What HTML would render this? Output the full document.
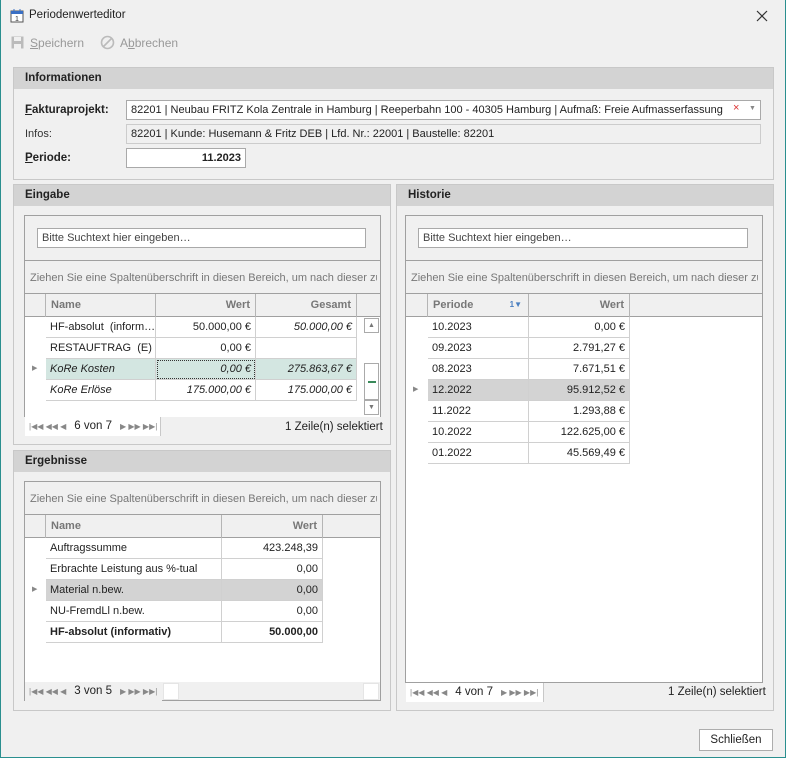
<!DOCTYPE html>
<html><head><meta charset="utf-8"><style>
*{box-sizing:border-box;margin:0;padding:0}
body{width:786px;height:758px;background:#f0f0f0;font-family:"Liberation Sans",sans-serif;font-size:11px;color:#222;position:relative;overflow:hidden}
.a{position:absolute;white-space:nowrap}
.frame{left:0;top:0;width:786px;height:758px;border:1px solid #2a8f8f;border-top:none}
.pan{border:1px solid #c8c8c8;background:#f0f0f0}
.ph{background:#d3d3d3;height:21px;font-weight:bold;padding:4px 0 0 11px;font-size:11.5px;color:#222}
.box{background:#fff;border:1px solid #a9a9a9;overflow:hidden}
.gb{border:1px solid #a0a0a0;background:#f0f0f0}
.grp{color:#777;font-size:11px;white-space:nowrap;overflow:hidden}
.hd{color:#777;font-weight:bold;height:23px;line-height:22px;border-right:1px solid #b5b5b5;padding:0 5px}
.c{height:21px;line-height:20px;border-right:1px solid #d0d0d0;border-bottom:1px solid #d0d0d0;padding:0 4px;white-space:nowrap;overflow:hidden;background:#fff}
.r{text-align:right}
.nav{color:#888;font-size:8px;background:#fff;height:19px;line-height:19px;padding-left:4px;border-right:1px solid #c8c8c8;overflow:hidden;white-space:nowrap}
.nav b{font-weight:normal;color:#222;font-size:11.5px;margin:0 8px}
</style></head><body>
<div class="a frame"></div>
<svg class="a" style="left:10px;top:8px" width="14" height="15" viewBox="0 0 14 15"><rect x="1" y="3" width="12" height="11" fill="#fff" stroke="#555"/><rect x="1" y="3" width="12" height="3" fill="#3a6fc4"/><line x1="4" y1="1" x2="4" y2="4" stroke="#3a6fc4"/><line x1="10" y1="1" x2="10" y2="4" stroke="#3a6fc4"/><text x="5" y="13" font-size="7" fill="#333" font-family="Liberation Sans">1</text></svg>
<div class="a" style="left:29px;top:9px;font-size:11.5px">Periodenwerteditor</div>
<svg class="a" style="left:756px;top:10px" width="12" height="12"><path d="M1 1L11 11M11 1L1 11" stroke="#333" stroke-width="1.2"/></svg>
<svg class="a" style="left:11px;top:36px" width="13" height="13"><rect x="0.5" y="0.5" width="12" height="12" fill="#bbb"/><rect x="3" y="1" width="7" height="4" fill="#f0f0f0"/><rect x="3" y="8" width="7" height="5" fill="#f0f0f0"/></svg>
<div class="a" style="left:30px;top:36px;color:#999;font-size:12px"><u>S</u>peichern</div>
<svg class="a" style="left:100px;top:35px" width="15" height="15"><circle cx="7.5" cy="7.5" r="6" fill="none" stroke="#bbb" stroke-width="1.6"/><path d="M3.5 11.5L11.5 3.5" stroke="#bbb" stroke-width="1.6"/></svg>
<div class="a" style="left:120px;top:36px;color:#999;font-size:12px">A<u>b</u>brechen</div>

<div class="a pan" style="left:13px;top:67px;width:761px;height:113px"><div class="ph">Informationen</div></div>
<div class="a" style="left:25px;top:104px;font-weight:bold;font-size:11.5px"><u>F</u>akturaprojekt:</div>
<div class="a box" style="left:126px;top:100px;width:635px;height:20px;padding:3px 4px">82201 | Neubau FRITZ Kola Zentrale in Hamburg | Reeperbahn 100 - 40305 Hamburg | Aufmaß: Freie Aufmasserfassung</div>
<div class="a" style="left:733px;top:102px;color:#d33;font-size:11px;background:#fff">×</div>
<div class="a" style="left:749px;top:105px;color:#888;font-size:7px">▼</div>
<div class="a" style="left:25px;top:128px;color:#333">Infos:</div>
<div class="a" style="left:126px;top:124px;width:635px;height:20px;border:1px solid #ccc;background:#f0f0f0;padding:3px 4px">82201 | Kunde: Husemann &amp; Fritz DEB | Lfd. Nr.: 22001 | Baustelle: 82201</div>
<div class="a" style="left:25px;top:152px;font-weight:bold;font-size:11.5px"><u>P</u>eriode:</div>
<div class="a box" style="left:126px;top:148px;width:120px;height:20px;padding:3px 4px;text-align:right;font-weight:bold">11.2023</div>

<div class="a pan" style="left:13px;top:184px;width:378px;height:261px"><div class="ph">Eingabe</div></div>
<div class="a gb" style="left:24px;top:215px;width:357px;height:202px"></div>
<div class="a box" style="left:37px;top:228px;width:329px;height:20px;padding:3px 4px;color:#444">Bitte Suchtext hier eingeben…</div>
<div class="a" style="left:24px;top:260px;width:357px;border-top:1px solid #a0a0a0"></div>
<div class="a grp" style="left:30px;top:272px;width:347px">Ziehen Sie eine Spaltenüberschrift in diesen Bereich, um nach dieser zu gruppieren</div>
<div class="a" style="left:25px;top:293px;width:355px;height:124px;background:#fff;border-top:1px solid #a0a0a0"></div>
<div class="a" style="left:25px;top:294px;width:355px;height:23px;background:#f0f0f0;border-bottom:1px solid #a0a0a0"></div>
<div class="a hd" style="left:25px;top:294px;width:21px"></div>
<div class="a hd" style="left:46px;top:294px;width:110px">Name</div>
<div class="a hd r" style="left:156px;top:294px;width:100px">Wert</div>
<div class="a hd r" style="left:256px;top:294px;width:101px">Gesamt</div>
<div class="a" style="left:46px;top:317px">
<div style="display:flex"><div class="c" style="width:110px">HF-absolut&nbsp; (inform…</div><div class="c r" style="width:100px">50.000,00 €</div><div class="c r" style="width:101px;font-style:italic">50.000,00 €</div></div>
<div style="display:flex"><div class="c" style="width:110px">RESTAUFTRAG&nbsp; (E)</div><div class="c r" style="width:100px">0,00 €</div><div class="c r" style="width:101px"></div></div>
<div style="display:flex;font-style:italic"><div class="c" style="width:110px;background:#d3e6e1">KoRe Kosten</div><div class="c r" style="width:100px;background:#d3e6e1;outline:1px dotted #333;outline-offset:-2px">0,00 €</div><div class="c r" style="width:101px;background:#d3e6e1">275.863,67 €</div></div>
<div style="display:flex;font-style:italic"><div class="c" style="width:110px">KoRe Erlöse</div><div class="c r" style="width:100px">175.000,00 €</div><div class="c r" style="width:101px">175.000,00 €</div></div>
</div>
<div class="a" style="left:32px;top:364px;color:#888;font-size:7px">▶</div>
<div class="a" style="left:364px;top:318px;width:15px;height:15px;border:1px solid #aaa;background:#fff;color:#777;font-size:7px;text-align:center;line-height:13px">▲</div>
<div class="a" style="left:364px;top:363px;width:15px;height:37px;border:1px solid #aaa;background:#fff"><div style="position:absolute;left:3px;top:17px;width:8px;height:2px;background:#3a8a5a"></div></div>
<div class="a" style="left:364px;top:400px;width:15px;height:15px;border:1px solid #aaa;background:#fff;color:#777;font-size:7px;text-align:center;line-height:13px">▼</div>
<div class="a nav" style="left:25px;top:417px;width:136px">|◀◀ ◀◀ ◀<b>6 von 7</b>▶ ▶▶ ▶▶|</div>
<div class="a" style="left:285px;top:421px;font-size:11.5px">1 Zeile(n) selektiert</div>

<div class="a pan" style="left:13px;top:450px;width:378px;height:261px"><div class="ph">Ergebnisse</div></div>
<div class="a gb" style="left:24px;top:481px;width:357px;height:220px"></div>
<div class="a grp" style="left:30px;top:493px;width:347px">Ziehen Sie eine Spaltenüberschrift in diesen Bereich, um nach dieser zu gruppieren</div>
<div class="a" style="left:25px;top:514px;width:355px;height:168px;background:#fff;border-top:1px solid #a0a0a0"></div>
<div class="a" style="left:25px;top:515px;width:355px;height:23px;background:#f0f0f0;border-bottom:1px solid #a0a0a0"></div>
<div class="a hd" style="left:25px;top:515px;width:21px"></div>
<div class="a hd" style="left:46px;top:515px;width:176px">Name</div>
<div class="a hd r" style="left:222px;top:515px;width:101px">Wert</div>
<div class="a" style="left:46px;top:538px">
<div style="display:flex"><div class="c" style="width:176px">Auftragssumme</div><div class="c r" style="width:101px">423.248,39</div></div>
<div style="display:flex"><div class="c" style="width:176px">Erbrachte Leistung aus %-tual</div><div class="c r" style="width:101px">0,00</div></div>
<div style="display:flex"><div class="c" style="width:176px;background:#d3d3d3">Material n.bew.</div><div class="c r" style="width:101px;background:#d3d3d3">0,00</div></div>
<div style="display:flex"><div class="c" style="width:176px">NU-FremdLl n.bew.</div><div class="c r" style="width:101px">0,00</div></div>
<div style="display:flex;font-weight:bold"><div class="c" style="width:176px">HF-absolut (informativ)</div><div class="c r" style="width:101px">50.000,00</div></div>
</div>
<div class="a" style="left:32px;top:585px;color:#888;font-size:7px">▶</div>
<div class="a nav" style="left:25px;top:682px;width:137px;background:#f0f0f0;border:none">|◀◀ ◀◀ ◀<b>3 von 5</b>▶ ▶▶ ▶▶|</div>
<div class="a" style="left:162px;top:682px;width:218px;height:18px;background:#f0f0f0"></div>
<div class="a" style="left:163px;top:683px;width:16px;height:17px;background:#fff;border:1px solid #e5e5e5"></div>
<div class="a" style="left:363px;top:683px;width:16px;height:17px;background:#fff;border:1px solid #e5e5e5"></div>

<div class="a pan" style="left:396px;top:184px;width:378px;height:527px"><div class="ph">Historie</div></div>
<div class="a gb" style="left:405px;top:215px;width:358px;height:468px"></div>
<div class="a box" style="left:418px;top:228px;width:330px;height:20px;padding:3px 4px;color:#444">Bitte Suchtext hier eingeben…</div>
<div class="a" style="left:405px;top:260px;width:358px;border-top:1px solid #a0a0a0"></div>
<div class="a grp" style="left:411px;top:272px;width:347px">Ziehen Sie eine Spaltenüberschrift in diesen Bereich, um nach dieser zu gruppieren</div>
<div class="a" style="left:406px;top:293px;width:356px;height:389px;background:#fff;border-top:1px solid #a0a0a0"></div>
<div class="a" style="left:406px;top:294px;width:356px;height:23px;background:#f0f0f0;border-bottom:1px solid #a0a0a0"></div>
<div class="a hd" style="left:406px;top:294px;width:22px"></div>
<div class="a hd" style="left:428px;top:294px;width:101px">Periode<span style="position:absolute;right:6px;font-size:8px;color:#4a7fc0">1▼</span></div>
<div class="a hd r" style="left:529px;top:294px;width:101px">Wert</div>
<div class="a" style="left:428px;top:317px">
<div style="display:flex"><div class="c" style="width:101px">10.2023</div><div class="c r" style="width:101px">0,00 €</div></div>
<div style="display:flex"><div class="c" style="width:101px">09.2023</div><div class="c r" style="width:101px">2.791,27 €</div></div>
<div style="display:flex"><div class="c" style="width:101px">08.2023</div><div class="c r" style="width:101px">7.671,51 €</div></div>
<div style="display:flex"><div class="c" style="width:101px;background:#d3d3d3">12.2022</div><div class="c r" style="width:101px;background:#d3d3d3">95.912,52 €</div></div>
<div style="display:flex"><div class="c" style="width:101px">11.2022</div><div class="c r" style="width:101px">1.293,88 €</div></div>
<div style="display:flex"><div class="c" style="width:101px">10.2022</div><div class="c r" style="width:101px">122.625,00 €</div></div>
<div style="display:flex"><div class="c" style="width:101px">01.2022</div><div class="c r" style="width:101px">45.569,49 €</div></div>
</div>
<div class="a" style="left:413px;top:385px;color:#888;font-size:7px">▶</div>
<div class="a nav" style="left:406px;top:683px;width:138px">|◀◀ ◀◀ ◀<b>4 von 7</b>▶ ▶▶ ▶▶|</div>
<div class="a" style="left:668px;top:686px;font-size:11.5px">1 Zeile(n) selektiert</div>

<div class="a" style="left:699px;top:729px;width:74px;height:22px;border:1px solid #adadad;background:#fff;text-align:center;line-height:20px;font-size:11.5px">Schließen</div>
</body></html>
